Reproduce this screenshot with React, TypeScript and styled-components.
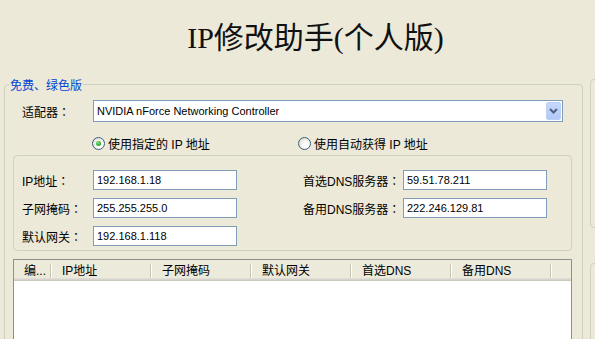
import React from "react";
import styled, { createGlobalStyle } from "styled-components";

const FONT = `"Liberation Sans", "Noto Sans CJK SC", sans-serif`;

const GlobalStyle = createGlobalStyle`
  html, body {
    margin: 0;
    padding: 0;
    background: #ece9d8;
  }
  * {
    box-sizing: border-box;
  }
`;

const Window = styled.div`
  width: 595px;
  height: 339px;
  overflow: hidden;
  background: #ece9d8;
  font-family: ${FONT};
  font-size: 12px;
  color: #000;
`;

const Title = styled.div`
  height: 76px;
  padding: 18px 0 0 36px;
  line-height: 40px;
  text-align: center;
  font-family: "Liberation Serif", "Noto Sans CJK SC", serif;
  font-size: 30px;
  color: #111;
`;

const Body = styled.div`
  display: flex;
  gap: 7px;
  padding-left: 4px;
`;

const GroupBox = styled.fieldset`
  flex: none;
  width: 579px;
  height: 290px;
  min-width: 0;
  margin: 0;
  padding: 0 10px 0 8px;
  border: 1px solid #d0d0bf;
  border-radius: 4px;
`;

const Caption = styled.legend`
  margin-left: -4px;
  padding: 4px 1px 0;
  line-height: 12px;
  color: #0046d5;
`;

const FormRow = styled.div`
  display: flex;
  align-items: center;
  margin-top: 8px;
  padding-left: 9px;
`;

const FieldLabel = styled.span<{ $width: number }>`
  flex: none;
  width: ${(p) => p.$width}px;
  white-space: nowrap;
`;

// full-width colon, centred like the Windows system font draws it
const Colon = styled.span`
  font-family: "Noto Sans CJK TC", "Noto Sans CJK SC", sans-serif;
`;

const ComboBox = styled.div`
  display: flex;
  align-items: center;
  justify-content: space-between;
  width: 470px;
  height: 22px;
  padding: 1px 1px 1px 3px;
  background: #fff;
  border: 1px solid #7f9db9;
  font-size: 11px;
`;

const ComboArrow = styled.div`
  display: flex;
  align-items: center;
  justify-content: center;
  width: 15px;
  height: 18px;
  background: linear-gradient(#c6d8fc, #b2c8f6);
  border: 1px solid #bcd0f8;
  border-radius: 2px;
`;

const RadioRow = styled.div`
  display: flex;
  align-items: center;
  height: 16px;
  margin-top: 13px;
  padding-left: 79px;
`;

const RadioOption = styled.label<{ $width: number }>`
  display: flex;
  align-items: center;
  gap: 3px;
  width: ${(p) => p.$width}px;
  white-space: nowrap;
`;

const RadioCircle = styled.span<{ $checked?: boolean }>`
  display: flex;
  align-items: center;
  justify-content: center;
  width: 13px;
  height: 13px;
  border-radius: 50%;
  border: 1px solid #3a5f84;
  background: radial-gradient(circle at 65% 65%, #fff 20%, #dcd9c8 90%);

  &::before {
    content: "";
    display: ${(p) => (p.$checked ? "block" : "none")};
    width: 5px;
    height: 5px;
    border-radius: 50%;
    background: radial-gradient(circle at 40% 35%, #8ee08e, #21a121 70%);
  }
`;

const Panel = styled.div`
  display: flex;
  gap: 66px;
  height: 96px;
  margin-top: 4px;
  padding: 14px 0 0 8px;
  border: 1px solid #d0d0bf;
  border-radius: 4px;
`;

const FieldColumn = styled.div`
  display: flex;
  flex-direction: column;
  gap: 8px;
`;

const Field = styled.div`
  display: flex;
  align-items: center;
`;

const TextBox = styled.div`
  width: 144px;
  height: 20px;
  padding-left: 3px;
  line-height: 18px;
  background: #fff;
  border: 1px solid #7f9db9;
  font-size: 11px;
`;

const ListView = styled.div`
  height: 110px;
  margin-top: 8px;
  background: #fff;
  border: 1px solid #8e8f8f;
`;

const ListHeader = styled.div`
  display: flex;
  height: 21px;
  background: #ebeadb;
  box-shadow: inset 0 -1px #cbc7b8, inset 0 -2px #d6d3ce, inset 0 -3px #e2ded5;
`;

const HeaderCell = styled.div<{ $width: number }>`
  flex: none;
  width: ${(p) => p.$width}px;
  padding: 0 0 2px 10px;
  display: flex;
  align-items: center;
  white-space: nowrap;
  background:
    linear-gradient(#c7c5b2, #c7c5b2) right 1px center / 1px 14px no-repeat,
    linear-gradient(#fff, #fff) right 0 center / 1px 14px no-repeat;
`;

const SideColumn = styled.div`
  flex: none;
  display: flex;
  flex-direction: column;
  width: 40px;
  padding-top: 3px;
`;

const SideBox = styled.div<{ $height: number; $gap?: number }>`
  flex: none;
  height: ${(p) => p.$height}px;
  margin-bottom: ${(p) => p.$gap || 0}px;
  border: 1px solid #d0d0bf;
  border-radius: 4px;
`;

const leftFields = [
  ["IP地址", "192.168.1.18"],
  ["子网掩码", "255.255.255.0"],
  ["默认网关", "192.168.1.118"]
];

const rightFields = [
  ["首选DNS服务器", "59.51.78.211"],
  ["备用DNS服务器", "222.246.129.81"]
];

const columns: [string, number][] = [
  ["编...", 38],
  ["IP地址", 100],
  ["子网掩码", 100],
  ["默认网关", 100],
  ["首选DNS", 100],
  ["备用DNS", 100]
];

export default function App() {
  return (
    <Window>
      <GlobalStyle />
      <Title>IP修改助手(个人版)</Title>
      <Body>
        <GroupBox>
          <Caption>免费、绿色版</Caption>
          <FormRow>
            <FieldLabel $width={71}>
              适配器<Colon>：</Colon>
            </FieldLabel>
            <ComboBox>
              <span>NVIDIA nForce Networking Controller</span>
              <ComboArrow>
                <svg width="9" height="6" viewBox="0 0 9 6">
                  <polyline
                    points="1,1 4.5,4.5 8,1"
                    fill="none"
                    stroke="#4d6185"
                    strokeWidth="2"
                  />
                </svg>
              </ComboArrow>
            </ComboBox>
          </FormRow>
          <RadioRow>
            <RadioOption $width={206}>
              <RadioCircle $checked />
              使用指定的 IP 地址
            </RadioOption>
            <RadioOption $width={200}>
              <RadioCircle />
              使用自动获得 IP 地址
            </RadioOption>
          </RadioRow>
          <Panel>
            <FieldColumn>
              {leftFields.map(([label, value]) => (
                <Field key={label}>
                  <FieldLabel $width={71}>
                    {label}
                    <Colon>：</Colon>
                  </FieldLabel>
                  <TextBox>{value}</TextBox>
                </Field>
              ))}
            </FieldColumn>
            <FieldColumn>
              {rightFields.map(([label, value]) => (
                <Field key={label}>
                  <FieldLabel $width={100}>
                    {label}
                    <Colon>：</Colon>
                  </FieldLabel>
                  <TextBox>{value}</TextBox>
                </Field>
              ))}
            </FieldColumn>
          </Panel>
          <ListView>
            <ListHeader>
              {columns.map(([name, width]) => (
                <HeaderCell key={name} $width={width}>
                  {name}
                </HeaderCell>
              ))}
            </ListHeader>
          </ListView>
        </GroupBox>
        <SideColumn>
          <SideBox $height={149} $gap={35} />
          <SideBox $height={120} />
        </SideColumn>
      </Body>
    </Window>
  );
}
